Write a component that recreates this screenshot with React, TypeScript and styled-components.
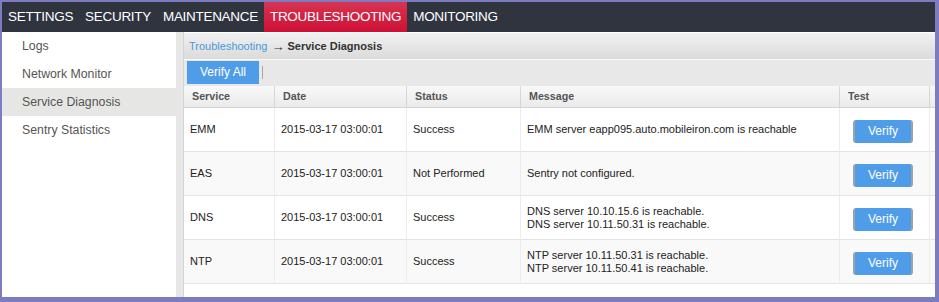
import styled, { createGlobalStyle } from 'styled-components';

interface Check {
  service: string;
  date: string;
  status: string;
  message: string[];
}

const checks: Check[] = [
  {
    service: 'EMM',
    date: '2015-03-17 03:00:01',
    status: 'Success',
    message: ['EMM server eapp095.auto.mobileiron.com is reachable'],
  },
  {
    service: 'EAS',
    date: '2015-03-17 03:00:01',
    status: 'Not Performed',
    message: ['Sentry not configured.'],
  },
  {
    service: 'DNS',
    date: '2015-03-17 03:00:01',
    status: 'Success',
    message: ['DNS server 10.10.15.6 is reachable.', 'DNS server 10.11.50.31 is reachable.'],
  },
  {
    service: 'NTP',
    date: '2015-03-17 03:00:01',
    status: 'Success',
    message: ['NTP server 10.11.50.31 is reachable.', 'NTP server 10.11.50.41 is reachable.'],
  },
];

const tabs = ['SETTINGS', 'SECURITY', 'MAINTENANCE', 'TROUBLESHOOTING', 'MONITORING'];
const menu = ['Logs', 'Network Monitor', 'Service Diagnosis', 'Sentry Statistics'];
const columns = ['Service', 'Date', 'Status', 'Message', 'Test', ''];

export default () => {
  return (
    <>
      <GlobalStyle />
      <Frame>
        <NavBar>
          {tabs.map((tab) => (
            <NavItem key={tab} $active={tab === 'TROUBLESHOOTING'}>
              {tab}
            </NavItem>
          ))}
        </NavBar>
        <Body>
          <Sidebar>
            {menu.map((item) => (
              <MenuItem key={item} $selected={item === 'Service Diagnosis'}>
                {item}
              </MenuItem>
            ))}
          </Sidebar>
          <Gutter />
          <Main>
            <Breadcrumb>
              <Crumb>Troubleshooting</Crumb>
              <Arrow>→</Arrow>
              <Current>Service Diagnosis</Current>
            </Breadcrumb>
            <Toolbar>
              <ToolButton>Verify All</ToolButton>
              <Separator />
            </Toolbar>
            <Grid>
              {columns.map((col, i) => (
                <HeadCell key={i}>{col}</HeadCell>
              ))}
              {checks.map((check, row) => (
                <Row key={check.service} $odd={row % 2 === 1}>
                  <Cell>{check.service}</Cell>
                  <Cell>{check.date}</Cell>
                  <Cell>{check.status}</Cell>
                  <Cell>
                    <div>
                      {check.message.map((line) => (
                        <div key={line}>{line}</div>
                      ))}
                    </div>
                  </Cell>
                  <ButtonCell>
                    <VerifyButton>Verify</VerifyButton>
                  </ButtonCell>
                  <Cell />
                </Row>
              ))}
            </Grid>
          </Main>
        </Body>
      </Frame>
    </>
  );
};

const GlobalStyle = createGlobalStyle`
  html, body {
    margin: 0;
    padding: 0;
    background: #7d7cc2;
    font-family: "Liberation Sans", Arial, sans-serif;
  }
`;

const Frame = styled.div`
  margin: 2px 0 0 2px;
  width: 933px;
  height: 295px;
  background: #fff;
  display: flex;
  flex-direction: column;
  overflow: hidden;
`;

const NavBar = styled.div`
  height: 30px;
  background: #30343f;
  display: flex;
`;

const NavItem = styled.div<{ $active?: boolean }>`
  padding: 0 6px;
  line-height: 30px;
  font-size: 13.5px;
  letter-spacing: -0.3px;
  color: #fff;
  background: ${(p) => (p.$active ? 'linear-gradient(#d63452, #cf0f36)' : 'transparent')};
`;

const Body = styled.div`
  flex: 1;
  display: flex;
`;

const Sidebar = styled.div`
  width: 174px;
  flex-shrink: 0;
  background: #fff;
`;

const MenuItem = styled.div<{ $selected?: boolean }>`
  height: 28px;
  line-height: 28px;
  padding-left: 20px;
  font-size: 12.3px;
  color: #555;
  background: ${(p) => (p.$selected ? '#e6e7e4' : '#fff')};
`;

const Gutter = styled.div`
  width: 7px;
  flex-shrink: 0;
  background: #e6e6e6;
  border-right: 1px solid #d4d4d4;
`;

const Main = styled.div`
  flex: 1;
  min-width: 0;
  display: flex;
  flex-direction: column;
  padding-top: 1px;
`;

const Breadcrumb = styled.div`
  height: 26px;
  display: flex;
  align-items: center;
  padding-left: 5px;
  font-size: 11px;
  background: linear-gradient(#f1f1f1, #dbdbdb);
  border-bottom: 1px solid #fafafa;
`;

const Crumb = styled.span`
  color: #4a9ad9;
`;

const Arrow = styled.span`
  margin: 0 3px 0 4px;
  font-size: 13px;
  color: #333;
`;

const Current = styled.span`
  color: #333;
  font-weight: bold;
`;

const Toolbar = styled.div`
  height: 26px;
  display: flex;
  align-items: flex-start;
  padding: 1px 0 0 3px;
  box-sizing: border-box;
  background: #e8e8e8;
`;

const ToolButton = styled.div`
  width: 72px;
  height: 23px;
  line-height: 23px;
  text-align: center;
  font-size: 12px;
  color: #fff;
  background: #4f9de8;
`;

const Separator = styled.div`
  width: 1px;
  height: 13px;
  margin: 5px 0 0 3px;
  background: #a8a8a8;
`;

const Grid = styled.div`
  display: grid;
  grid-template-columns: 91px 132px 114px 319px 90px minmax(0, 1fr);
`;

const HeadCell = styled.div`
  height: 21px;
  line-height: 21px;
  padding-left: 8px;
  font-size: 10.7px;
  font-weight: bold;
  color: #555;
  background: linear-gradient(#f8f8f8, #ebebeb);
  border-right: 1px solid #d6d6d6;
  border-bottom: 1px solid #d2d2d2;
  &:last-child {
    border-right: none;
  }
`;

const Row = styled.div<{ $odd?: boolean }>`
  display: contents;
  & > div {
    background: ${(p) => (p.$odd ? '#f9f9f9' : '#fff')};
  }
`;

const Cell = styled.div`
  height: 43px;
  display: flex;
  align-items: center;
  padding-left: 6px;
  font-size: 11px;
  line-height: 13px;
  color: #222;
  border-right: 1px solid #ececec;
  border-bottom: 1px solid #e4e4e4;
  &:last-child {
    border-right: none;
  }
`;

const ButtonCell = styled(Cell)`
  padding-left: 13px;
`;

const VerifyButton = styled.div`
  width: 56px;
  height: 23px;
  margin-top: 4px;
  line-height: 23px;
  text-align: center;
  font-size: 12px;
  color: #fff;
  background: #4f9de8;
  border-radius: 3px;
  border-left: 2px solid #9aa3ad;
  border-right: 2px solid #9aa3ad;
`;
